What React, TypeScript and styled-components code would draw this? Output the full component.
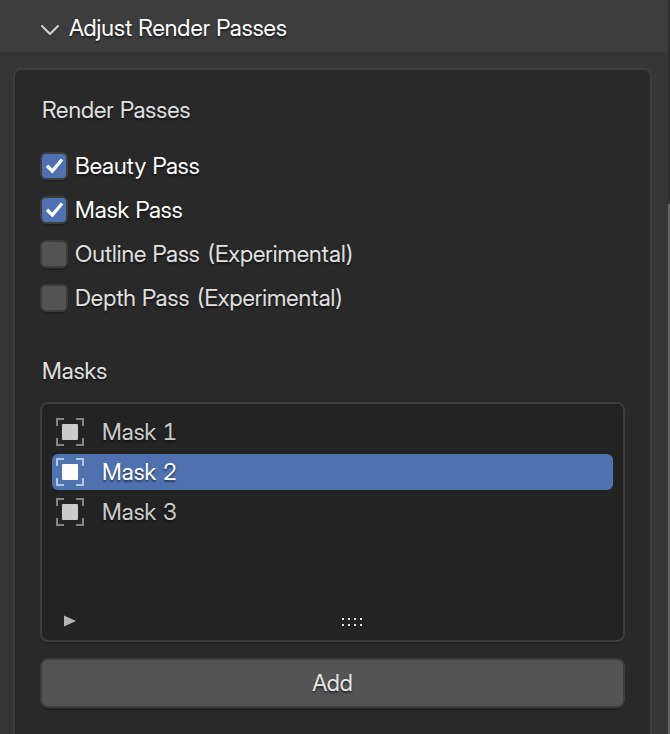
import { useState } from "react";
import styled, { createGlobalStyle } from "styled-components";

const GlobalStyle = createGlobalStyle`
  *, *::before, *::after { box-sizing: border-box; }
  body {
    margin: 0;
    background: #353535;
    color: #e0e0e0;
    font-family: "Inter Display", Inter, "Liberation Sans", sans-serif;
    font-size: 23px;
    line-height: 28px;
    font-variant-numeric: tabular-nums;
    text-shadow: 0 2px 2px rgba(0, 0, 0, 0.5);
  }
  button { font: inherit; font-variant-numeric: inherit; text-shadow: inherit; cursor: pointer; }
`;

const Page = styled.div`
  display: grid;
  grid-template-columns: minmax(0, 1fr) 2px;
  min-height: 100vh;
`;

const Editor = styled.main`
  display: flex;
  flex-direction: column;
`;

const ScrollTrack = styled.div`
  display: flex;
  padding-top: 204px;
  background: #303030;
`;

const ScrollThumb = styled.div`
  flex: 1;
  background: #676767;
`;

const Header = styled.button`
  display: flex;
  align-items: center;
  gap: 8px;
  width: 100%;
  height: 52px;
  padding: 4px 39px 0;
  border: 0;
  background: #3d3d3d;
  color: #ffffff;
  text-align: left;
`;

const Chevron = styled.svg<{ $open: boolean }>`
  width: 22px;
  height: 22px;
  transform: ${(p) => (p.$open ? "none" : "rotate(-90deg)")};
`;

const Panel = styled.section`
  flex: 1;
  margin: 16px 16px 0 13px;
  padding: 26px 25px;
  border: 2px solid #3d3d3d;
  border-bottom: 0;
  border-radius: 8px 8px 0 0;
  background: #292929;
`;

const Heading = styled.h2`
  margin: 0;
  padding-left: 2px;
  font-size: 23px;
  font-weight: 400;
`;

const PassList = styled.div`
  display: flex;
  flex-direction: column;
  align-items: flex-start;
  gap: 16px;
  margin: 28px 0 45px;
`;

const PassLabel = styled.label`
  display: flex;
  align-items: center;
  gap: 7px;
  &:has(input:checked) { color: #ffffff; }
`;

const CheckWrap = styled.span`
  display: grid;
  width: 28px;
  height: 28px;
  > * { grid-area: 1 / 1; }
`;

const Checkbox = styled.input`
  appearance: none;
  width: 28px;
  height: 28px;
  margin: 0;
  border: 2px solid #3d3d3d;
  border-radius: 6px;
  background: #545454;
  box-shadow: 0 2px 0 rgba(0, 0, 0, 0.15);
  &:checked { background: #4f71b0; }
  & + svg { visibility: hidden; pointer-events: none; }
  &:checked + svg { visibility: visible; }
`;

const MaskBox = styled.div`
  display: flex;
  flex-direction: column;
  min-height: 240px;
  margin: 17px 0 16px;
  padding: 10px 10px 9px;
  border: 2px solid #3d3d3d;
  border-radius: 8px;
  background: #232323;
  box-shadow: 0 2px 0 rgba(0, 0, 0, 0.15);
`;

const MaskRows = styled.ul`
  display: flex;
  flex-direction: column;
  gap: 4px;
  margin: 0;
  padding: 0;
  list-style: none;
`;

const MaskRow = styled.button<{ $active: boolean }>`
  display: flex;
  align-items: center;
  gap: 18px;
  width: 100%;
  height: 36px;
  padding: 0 4px;
  border: 0;
  border-radius: 6px;
  background: ${(p) => (p.$active ? "#4f71b0" : "transparent")};
  color: ${(p) => (p.$active ? "#ffffff" : "#cccccc")};
`;

const BoxFooter = styled.div`
  display: grid;
  grid-template-columns: 40px 1fr;
  align-items: center;
  height: 20px;
  margin-top: auto;
`;

const FilterToggle = styled.button`
  display: flex;
  align-items: center;
  width: 24px;
  height: 20px;
  margin-left: 12px;
  padding: 0;
  border: 0;
  background: none;
`;

const Grip = styled.svg`
  justify-self: center;
  width: 21px;
  height: 10px;
`;

const AddButton = styled.button`
  width: 100%;
  height: 50px;
  padding: 0;
  border: 2px solid #3d3d3d;
  border-radius: 8px;
  background: #545454;
  color: #e6e6e6;
  box-shadow: 0 2px 0 rgba(0, 0, 0, 0.15);
`;

function MaskIcon({ active }: { active: boolean }) {
  return (
    <svg width="28" height="28" viewBox="0 0 28 28" aria-hidden="true">
      <path
        d="M1 8V1H8M20 1H27V8M27 20V27H20M8 27H1V20"
        fill="none"
        stroke={active ? "#b5c4df" : "#858585"}
        strokeWidth="2"
      />
      <rect x="6" y="6" width="16" height="16" rx="1" fill={active ? "#ffffff" : "#cccccc"} />
    </svg>
  );
}

function PassOption({ label, checked }: { label: string; checked: boolean }) {
  return (
    <PassLabel>
      <CheckWrap>
        <Checkbox type="checkbox" defaultChecked={checked} />
        <svg width="28" height="28" viewBox="0 0 28 28" aria-hidden="true">
          <path d="M7 13.8L12.3 19L22 7.5" fill="none" stroke="#ffffff" strokeWidth="3.3" />
        </svg>
      </CheckWrap>
      {label}
    </PassLabel>
  );
}

const passes = [
  { label: "Beauty Pass", checked: true },
  { label: "Mask Pass", checked: true },
  { label: "Outline Pass (Experimental)", checked: false },
  { label: "Depth Pass (Experimental)", checked: false },
];

export default function App() {
  const [open, setOpen] = useState(true);
  const [masks, setMasks] = useState(["Mask 1", "Mask 2", "Mask 3"]);
  const [selected, setSelected] = useState(1);

  return (
    <>
      <GlobalStyle />
      <Page>
        <Editor>
          <Header type="button" aria-expanded={open} onClick={() => setOpen(!open)}>
            <Chevron $open={open} viewBox="0 0 22 22" aria-hidden="true">
              <path
                d="M3 9L11 17L19 9"
                fill="none"
                stroke="#d2d2d2"
                strokeWidth="2"
                strokeLinecap="round"
                strokeLinejoin="round"
              />
            </Chevron>
            Adjust Render Passes
          </Header>
          {open && (
            <Panel>
              <Heading>Render Passes</Heading>
              <PassList>
                {passes.map((p) => (
                  <PassOption key={p.label} {...p} />
                ))}
              </PassList>
              <Heading>Masks</Heading>
              <MaskBox>
                <MaskRows>
                  {masks.map((name, i) => (
                    <li key={name}>
                      <MaskRow
                        type="button"
                        $active={i === selected}
                        aria-pressed={i === selected}
                        onClick={() => setSelected(i)}
                      >
                        <MaskIcon active={i === selected} />
                        {name}
                      </MaskRow>
                    </li>
                  ))}
                </MaskRows>
                <BoxFooter>
                  <FilterToggle type="button" aria-label="Filter masks">
                    <svg width="12" height="12" viewBox="0 0 12 12" aria-hidden="true">
                      <path d="M0 0.5L12 6L0 11.5Z" fill="#b4b4b4" />
                    </svg>
                  </FilterToggle>
                  <Grip viewBox="0 0 21 10" aria-hidden="true">
                    <path
                      d="M0 3H2M6 3H8M12 3H14M18 3H20M0 9H2M6 9H8M12 9H14M18 9H20"
                      stroke="#e0e0e0"
                      strokeWidth="2"
                    />
                  </Grip>
                </BoxFooter>
              </MaskBox>
              <AddButton type="button" onClick={() => setMasks([...masks, `Mask ${masks.length + 1}`])}>
                Add
              </AddButton>
            </Panel>
          )}
        </Editor>
        <ScrollTrack>
          <ScrollThumb />
        </ScrollTrack>
      </Page>
    </>
  );
}
